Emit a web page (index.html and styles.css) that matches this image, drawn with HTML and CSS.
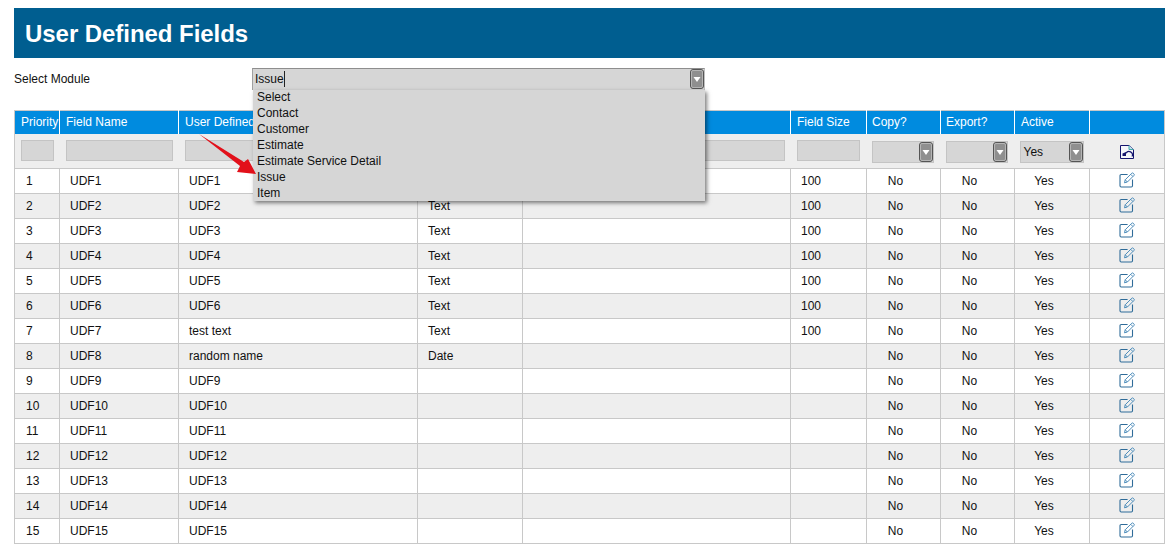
FILE: index.html
```html
<!DOCTYPE html>
<html lang="en">
<head>
<meta charset="utf-8">
<title>User Defined Fields</title>
<link rel="stylesheet" href="styles.css">
</head>
<body>
<svg class="defs" width="0" height="0" aria-hidden="true">
  <symbol id="edit" viewBox="0 0 16 16">
    <path d="M8.600 2.500H2.200C1.500 2.500 1 3 1 3.700V13.800C1 14.500 1.500 15 2.200 15H12.300C13 15 13.500 14.500 13.500 13.800V7.500" fill="none" stroke="#2f6c99" stroke-width="1.100"/>
    <path d="M5.500 10.800L6.200 7.800L12.800 1.200C13.200 .8 13.800 .8 14.200 1.200L15 2C15.400 2.400 15.400 3 15 3.400L8.400 10Z M6.200 7.800L8.400 10 M11.700 2.300L13.900 4.500" fill="none" stroke="#4d8dbb" stroke-width="1"/>
  </symbol>
  <symbol id="caret" viewBox="0 0 14 20">
    <rect x=".5" y=".5" width="13" height="19" rx="2.500" fill="#8f8f8f" stroke="#555"/>
    <rect x="1.500" y="1.500" width="11" height="17" rx="1.500" fill="none" stroke="#b5b5b5"/>
    <path d="M3.500 8H10.500L7 13Z" fill="#fff"/>
  </symbol>
</svg>
<header class="banner"><h1>User Defined Fields</h1></header>
<div class="module-row">
  <label class="module-label">Select Module</label>
  <div class="combo">
    <span class="combo-value">Issue</span>
    <svg class="caret combo-caret"><use href="#caret"/></svg>
    <ul class="combo-list">
      <li>Select</li><li>Contact</li><li>Customer</li><li>Estimate</li><li>Estimate Service Detail</li><li>Issue</li><li>Item</li>
    </ul>
  </div>
</div>
<table class="grid">
  <colgroup>
    <col class="c-pri"><col class="c-name"><col class="c-user"><col class="c-type"><col class="c-desc"><col class="c-size"><col class="c-copy"><col class="c-exp"><col class="c-act"><col class="c-edit">
  </colgroup>
  <thead>
    <tr class="head">
      <th class="tight">Priority</th><th>Field Name</th><th>User Defined</th><th></th><th></th><th>Field Size</th><th class="snug">Copy?</th><th class="snug">Export?</th><th>Active</th><th></th>
    </tr>
    <tr class="filter">
      <td><span class="box"></span></td>
      <td><span class="box"></span></td>
      <td><span class="box"></span></td>
      <td><span class="box"></span></td>
      <td><span class="box"></span></td>
      <td><span class="box narrow"></span></td>
      <td><span class="box sel narrow"><svg class="caret"><use href="#caret"/></svg></span></td>
      <td><span class="box sel narrow"><svg class="caret"><use href="#caret"/></svg></span></td>
      <td><span class="box sel">Yes<svg class="caret"><use href="#caret"/></svg></span></td>
      <td class="icon"><svg class="undo" viewBox="0 0 14 15"><path d="M.5 1.500H9L13.500 5.500V14.500H.5Z" fill="#f4f6fa" stroke="#14146e"/><path d="M9 1.500V5.500H13.500" fill="#bfe3ee" stroke="#4aa"/><path d="M12 12.500A3.400 3.400 0 0 0 6 9.300" fill="none" stroke="#14146e" stroke-width="1.200"/><path d="M2.500 9.500L6 8V12H2.500Z" fill="#14146e"/></svg></td>
    </tr>
  </thead>
  <tbody>
    <tr><td>1</td><td>UDF1</td><td>UDF1</td><td>Text</td><td></td><td>100</td><td class="mid">No</td><td class="mid">No</td><td class="mid">Yes</td><td class="icon"><svg class="edit"><use href="#edit"/></svg></td></tr>
    <tr><td>2</td><td>UDF2</td><td>UDF2</td><td>Text</td><td></td><td>100</td><td class="mid">No</td><td class="mid">No</td><td class="mid">Yes</td><td class="icon"><svg class="edit"><use href="#edit"/></svg></td></tr>
    <tr><td>3</td><td>UDF3</td><td>UDF3</td><td>Text</td><td></td><td>100</td><td class="mid">No</td><td class="mid">No</td><td class="mid">Yes</td><td class="icon"><svg class="edit"><use href="#edit"/></svg></td></tr>
    <tr><td>4</td><td>UDF4</td><td>UDF4</td><td>Text</td><td></td><td>100</td><td class="mid">No</td><td class="mid">No</td><td class="mid">Yes</td><td class="icon"><svg class="edit"><use href="#edit"/></svg></td></tr>
    <tr><td>5</td><td>UDF5</td><td>UDF5</td><td>Text</td><td></td><td>100</td><td class="mid">No</td><td class="mid">No</td><td class="mid">Yes</td><td class="icon"><svg class="edit"><use href="#edit"/></svg></td></tr>
    <tr><td>6</td><td>UDF6</td><td>UDF6</td><td>Text</td><td></td><td>100</td><td class="mid">No</td><td class="mid">No</td><td class="mid">Yes</td><td class="icon"><svg class="edit"><use href="#edit"/></svg></td></tr>
    <tr><td>7</td><td>UDF7</td><td>test text</td><td>Text</td><td></td><td>100</td><td class="mid">No</td><td class="mid">No</td><td class="mid">Yes</td><td class="icon"><svg class="edit"><use href="#edit"/></svg></td></tr>
    <tr><td>8</td><td>UDF8</td><td>random name</td><td>Date</td><td></td><td></td><td class="mid">No</td><td class="mid">No</td><td class="mid">Yes</td><td class="icon"><svg class="edit"><use href="#edit"/></svg></td></tr>
    <tr><td>9</td><td>UDF9</td><td>UDF9</td><td></td><td></td><td></td><td class="mid">No</td><td class="mid">No</td><td class="mid">Yes</td><td class="icon"><svg class="edit"><use href="#edit"/></svg></td></tr>
    <tr><td>10</td><td>UDF10</td><td>UDF10</td><td></td><td></td><td></td><td class="mid">No</td><td class="mid">No</td><td class="mid">Yes</td><td class="icon"><svg class="edit"><use href="#edit"/></svg></td></tr>
    <tr><td>11</td><td>UDF11</td><td>UDF11</td><td></td><td></td><td></td><td class="mid">No</td><td class="mid">No</td><td class="mid">Yes</td><td class="icon"><svg class="edit"><use href="#edit"/></svg></td></tr>
    <tr><td>12</td><td>UDF12</td><td>UDF12</td><td></td><td></td><td></td><td class="mid">No</td><td class="mid">No</td><td class="mid">Yes</td><td class="icon"><svg class="edit"><use href="#edit"/></svg></td></tr>
    <tr><td>13</td><td>UDF13</td><td>UDF13</td><td></td><td></td><td></td><td class="mid">No</td><td class="mid">No</td><td class="mid">Yes</td><td class="icon"><svg class="edit"><use href="#edit"/></svg></td></tr>
    <tr><td>14</td><td>UDF14</td><td>UDF14</td><td></td><td></td><td></td><td class="mid">No</td><td class="mid">No</td><td class="mid">Yes</td><td class="icon"><svg class="edit"><use href="#edit"/></svg></td></tr>
    <tr><td>15</td><td>UDF15</td><td>UDF15</td><td></td><td></td><td></td><td class="mid">No</td><td class="mid">No</td><td class="mid">Yes</td><td class="icon"><svg class="edit"><use href="#edit"/></svg></td></tr>
  </tbody>
</table>
<svg class="pointer" viewBox="0 0 60 44" aria-hidden="true"><path d="M0 0L45 28L49 25L57 40L38 38L41 32Z" fill="#e2101a"/></svg>
</body>
</html>
```
FILE: styles.css
```css
* { box-sizing: border-box; }
html, body { margin: 0; height: 100%; }
body {
  position: relative;
  padding: 8px 8px 0 14px;
  overflow: hidden;
  background: #fff;
  color: #111;
  font: 12px/16px "Liberation Sans", Arial, sans-serif;
}
.defs { position: absolute; }
.banner {
  height: 50px;
  background: #005e90;
  display: flex;
  align-items: center;
  padding: 2px 0 0 11px;
}
.banner h1 {
  margin: 0;
  color: #fff;
  font-size: 24px;
  line-height: 28px;
  font-weight: 700;
  letter-spacing: -.05px;
}
.module-row {
  display: flex;
  height: 52px;
  padding-top: 10px;
}
.module-label { width: 238px; padding-top: 3px; }
.combo {
  position: relative;
  width: 453px;
  height: 22px;
  background: #d6d6d6;
  border-top: 1px solid #8e8e8e;
  border-left: 1px solid #a0a0a0;
  border-right: 1px solid #c0c0c0;
  padding: 2px 0 0 2px;
}
.combo-value { border-right: 1px solid #222; display: inline-block; height: 16px; }
.combo-caret { position: absolute; right: 0; top: 0; }
.caret { width: 14px; height: 20px; display: block; }
.combo-list {
  position: absolute;
  z-index: 2;
  left: 0;
  right: -1px;
  top: 21px;
  height: 111px;
  margin: 0;
  padding: 0 0 0 4px;
  list-style: none;
  background: #d6d6d6;
  box-shadow: 2px 2px 4px rgba(0, 0, 0, .5);
}
.combo-list li { height: 16px; position: relative; top: -1px; }
.grid {
  width: 1151px;
  table-layout: fixed;
  border-collapse: collapse;
  border: 1px solid #c8c8c8;
}
.c-pri { width: 45px; }
.c-name { width: 119px; }
.c-user { width: 239px; }
.c-type { width: 105px; }
.c-desc { width: 268px; }
.c-size { width: 76px; }
.c-copy { width: 74px; }
.c-exp { width: 74px; }
.c-act { width: 75px; }
.c-edit { width: 75px; }
.head { height: 23px; background: #008bdf; }
.head th {
  padding: 0 6px;
  color: #fff;
  font-weight: 400;
  text-align: left;
  white-space: nowrap;
  overflow: hidden;
  border-left: 1px solid #fff;
}
.head th:first-child { border-left: 0; }
.head th.tight { padding: 0 0 0 6px; }
.head th.snug { padding-left: 5px; }
.filter { height: 35px; background: #eee; }
.filter td { padding: 0 6px; }
.box {
  display: flex;
  align-items: center;
  justify-content: space-between;
  height: 21px;
  background: #d6d6d6;
  border: 1px solid #c4c4c4;
}
.box.narrow { margin-right: 1px; }
.box.sel { height: 22px; margin-top: 2px; margin-left: -1px; padding-left: 3px; }
.box.sel .caret { margin-left: auto; }
tbody tr { height: 25px; }
tbody tr:nth-child(even) { background: #eee; }
tbody td {
  padding: 0 0 0 10px;
  border: 1px solid #c8c8c8;
  white-space: nowrap;
}
tbody td:first-child { padding-left: 11px; }
tbody td.mid { padding: 0 16px 0 0; text-align: center; }
tbody td.icon, .filter td.icon { padding: 0; }
.edit { width: 16px; height: 16px; display: block; margin: -3px auto 0; }
.undo { width: 14px; height: 15px; display: block; margin: 2px auto 0; }
.pointer {
  position: absolute;
  left: 199px;
  top: 134px;
  width: 60px;
  height: 44px;
  z-index: 3;
}
```
